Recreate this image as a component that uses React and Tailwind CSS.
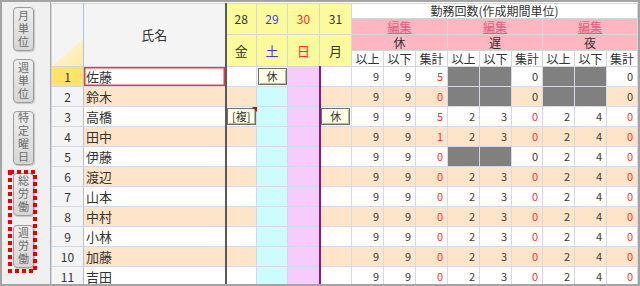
import React from 'react';

const names = ['佐藤', '鈴木', '高橋', '田中', '伊藤', '渡辺', '山本', '中村', '小林', '加藤', '吉田'];
const std = ['9', '9', '0r', '2', '3', '0r', '2', '4', '0r'];
const counts = [
  ['9', '9', '5r', 'G', 'G', '0', 'G', 'G', '0'],
  ['9', '9', '0r', 'G', 'G', '0', 'G', 'G', '0'],
  ['9', '9', '5r', '2', '3', '0r', '2', '4', '0r'],
  ['9', '9', '1r', '2', '3', '0r', '2', '4', '0r'],
  ['9', '9', '0r', 'G', 'G', '0', '2', '4', '0r'],
  std, std, std, std, std, std,
];

function VBtn({ text, h }) {
  return (
    <div
      className={`flex w-[21px] ${h} items-center justify-center rounded-[4px] border border-[#9c9c9c] bg-gradient-to-b from-[#eeeeee] to-[#d6d6d6] text-[11px] text-[#6c6c6c] shadow-[1px_1px_1px_rgba(0,0,0,0.18)]`}
    >
      <span className="leading-[12px] tracking-[2px] [writing-mode:vertical-rl]">{text}</span>
    </div>
  );
}

function CellBox({ children, flag }) {
  return (
    <div className="relative flex h-[17px] w-[29px] items-center justify-center border border-[#6e6e66] bg-[#fffde6] text-[11px] leading-none text-[#333] shadow-[inset_1px_1px_0_#ffffff,inset_-1px_-1px_0_#b8b8a8]">
      {children}
      {flag && (
        <svg className="absolute -right-[2px] -top-[2px]" width="5" height="5" viewBox="0 0 5 5">
          <polygon points="0,0 5,0 5,5" fill="#e00000" />
        </svg>
      )}
    </div>
  );
}

export default function App() {
  const hdrLine = 'border border-[#d6d6d6]';
  const dataLine = 'border border-[#d3dbe8]';
  return (
    <div className="h-[286px] w-[640px] overflow-hidden border-2 border-[#a4a4a4] bg-white font-['Noto_Sans_CJK_JP','Noto_Sans',sans-serif] text-[#333]">
      <div className="flex h-full">
        {/* toolbar */}
        <div className="flex w-[49px] shrink-0 flex-col items-start border-r border-[#a8a8a8] bg-[#f0f0f0] pt-[5px]">
          <div className="flex flex-col gap-[8px] pl-[11px]">
            <VBtn text="月単位" h="h-[44px]" />
            <VBtn text="週単位" h="h-[44px]" />
            <VBtn text="特定曜日" h="h-[54px]" />
          </div>
          <div className="relative ml-[6px] mt-[5px] flex w-[29px] flex-col gap-[9px] pb-[5px] pl-[5px] pt-[3px]">
            <svg className="absolute inset-0" width="29" height="103" viewBox="0 0 29 103">
              <rect x="2" y="2" width="25" height="99" fill="none" stroke="#e60000" strokeWidth="4" strokeDasharray="4 3" />
            </svg>
            <VBtn text="総労働" h="h-[43px]" />
            <VBtn text="週労働" h="h-[43px]" />
          </div>
        </div>

        {/* grid */}
        <div className="flex-1 pt-[1px]">
          <table className="w-[587px] table-fixed border-collapse">
            <colgroup>
              <col className="w-[32px]" />
              <col className="w-[142px]" />
              <col className="w-[31px]" />
              <col className="w-[31px]" />
              <col className="w-[32px]" />
              <col className="w-[32px]" />
              <col className="w-[32px]" />
              <col className="w-[32px]" />
              <col className="w-[32px]" />
              <col className="w-[32px]" />
              <col className="w-[32px]" />
              <col className="w-[31px]" />
              <col className="w-[32px]" />
              <col className="w-[32px]" />
              <col className="w-[31px]" />
            </colgroup>
            <thead>
              <tr className="h-[15px]">
                <td rowSpan={4} className="relative border border-[#d6d6d6] border-r-[#a9c2de] bg-[#f4f4f4] p-0">
                  <svg className="absolute bottom-0 right-0" width="31" height="27" viewBox="0 0 31 27">
                    <defs>
                      <linearGradient id="tri" x1="1" y1="1" x2="0" y2="0">
                        <stop offset="0" stopColor="#fdeaa6" />
                        <stop offset="1" stopColor="#fdf8e4" />
                      </linearGradient>
                    </defs>
                    <polygon points="0,27 31,0 31,27" fill="url(#tri)" />
                  </svg>
                </td>
                <td rowSpan={4} className="border border-[#d6d6d6] border-l-[#a9c2de] border-r-2 border-r-[#5a5a5a] bg-[#f4f4f4] text-center text-[13px]">
                  氏名
                </td>
                <td rowSpan={2} className={`${hdrLine} bg-[#fbfb9c] text-center text-[12px]`}>28</td>
                <td rowSpan={2} className={`${hdrLine} bg-[#fbfb9c] text-center text-[12px] text-[#3b3bf0]`}>29</td>
                <td rowSpan={2} className={`${hdrLine} bg-[#fbfb9c] text-center text-[12px] text-[#ff2d2d]`}>30</td>
                <td rowSpan={2} className={`${hdrLine} bg-[#fbfb9c] text-center text-[12px]`}>31</td>
                <td colSpan={9} className={`${hdrLine} bg-white text-center text-[12px] leading-[14px]`}>
                  勤務回数(作成期間単位)
                </td>
              </tr>
              <tr className="h-[16px]">
                {[0, 1, 2].map((i) => (
                  <td key={i} colSpan={3} className={`${hdrLine} bg-[#ffb6c3] text-center text-[12px] leading-[15px]`}>
                    <span className="text-[#e0607e] underline">編集</span>
                  </td>
                ))}
              </tr>
              <tr className="h-[16px]">
                <td rowSpan={2} className={`${hdrLine} bg-[#fbfb9c] text-center text-[13px]`}>金</td>
                <td rowSpan={2} className={`${hdrLine} bg-[#fbfb9c] text-center text-[13px] text-[#3b3bf0]`}>土</td>
                <td rowSpan={2} className={`${hdrLine} bg-[#fbfb9c] text-center text-[13px] text-[#ff2d2d]`}>日</td>
                <td rowSpan={2} className={`${hdrLine} bg-[#fbfb9c] text-center text-[13px]`}>月</td>
                {['休', '遅', '夜'].map((t) => (
                  <td key={t} colSpan={3} className={`${hdrLine} bg-[#ffb6c3] text-center text-[12px] leading-[15px]`}>
                    {t}
                  </td>
                ))}
              </tr>
              <tr className="h-[16px]">
                {[0, 1, 2].flatMap((g) =>
                  ['以上', '以下', '集計'].map((t) => (
                    <td key={g + t} className={`${hdrLine} bg-white text-center text-[12px] leading-[15px]`}>
                      {t}
                    </td>
                  ))
                )}
              </tr>
            </thead>
            <tbody>
              {names.map((nm, r) => {
                const even = r % 2 === 1;
                const bg = even ? 'bg-[#fee5c9]' : 'bg-white';
                return (
                  <tr key={r} className="h-[20px]">
                    <td
                      className={`border border-[#cdd7e6] border-r-[#a9c2de] text-center text-[12px] leading-none ${
                        r === 0 ? 'bg-[#fde36a]' : 'bg-[#f4f4f4]'
                      }`}
                    >
                      {r + 1}
                    </td>
                    <td
                      className={`border border-[#cdd7e6] border-l-[#a9c2de] border-r-2 border-r-[#5a5a5a] pl-[2px] text-[13px] leading-none ${bg} ${
                        r === 0 ? 'shadow-[inset_0_0_0_1.5px_#f03a3a]' : ''
                      }`}
                    >
                      {nm}
                    </td>
                    <td className={`${dataLine} ${bg} p-0`}>
                      {r === 2 && (
                        <div className="flex justify-center">
                          <CellBox flag>[複]</CellBox>
                        </div>
                      )}
                    </td>
                    <td className={`${dataLine} ${r === 0 ? 'bg-white' : 'bg-[#ccfcfc]'} p-0`}>
                      {r === 0 && (
                        <div className="flex justify-center">
                          <CellBox>休</CellBox>
                        </div>
                      )}
                    </td>
                    <td className={`${dataLine} border-r-2 border-r-[#8a1a8a] bg-[#f6ccfc] p-0`} />
                    <td className={`${dataLine} ${bg} p-0`}>
                      {r === 2 && (
                        <div className="flex justify-center">
                          <CellBox>休</CellBox>
                        </div>
                      )}
                    </td>
                    {counts[r].map((v, i) => {
                      if (v === 'G') {
                        return <td key={i} className={`${dataLine} bg-[#808080]`} />;
                      }
                      const red = v.endsWith('r');
                      return (
                        <td
                          key={i}
                          className={`${dataLine} ${bg} pr-[4px] text-right text-[11px] leading-none ${
                            red ? 'text-[#ff3333]' : 'text-[#3a3a3a]'
                          }`}
                        >
                          {red ? v.slice(0, -1) : v}
                        </td>
                      );
                    })}
                  </tr>
                );
              })}
            </tbody>
          </table>
        </div>
      </div>
    </div>
  );
}
